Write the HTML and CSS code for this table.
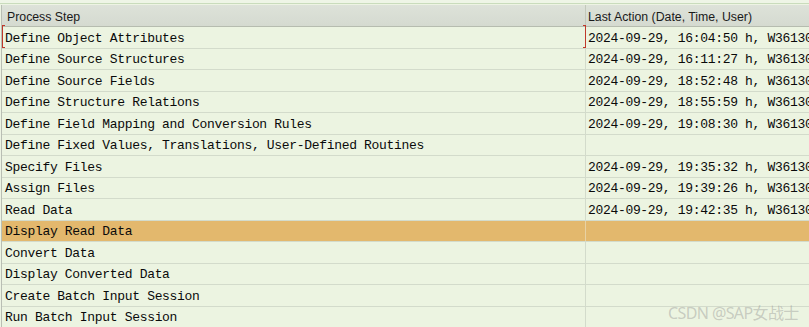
FILE: index.html
```html
<!DOCTYPE html>
<html>
<head>
<meta charset="utf-8">
<link rel="stylesheet" href="styles.css">
</head>
<body>
<div class="screen">
  <div class="topstrip"></div>
  <div class="table">
    <div class="row head">
      <div class="cell c1">Process Step</div>
      <div class="cell c2">Last Action (Date, Time, User)</div>
    </div>
    <div class="row focus">
      <div class="cell c1">Define Object Attributes</div>
      <div class="cell c2">2024-09-29, 16:04:50 h, W36130</div>
      <span class="br br-l"></span><span class="br br-r"></span>
    </div>
    <div class="row"><div class="cell c1">Define Source Structures</div><div class="cell c2">2024-09-29, 16:11:27 h, W36130</div></div>
    <div class="row"><div class="cell c1">Define Source Fields</div><div class="cell c2">2024-09-29, 18:52:48 h, W36130</div></div>
    <div class="row"><div class="cell c1">Define Structure Relations</div><div class="cell c2">2024-09-29, 18:55:59 h, W36130</div></div>
    <div class="row"><div class="cell c1">Define Field Mapping and Conversion Rules</div><div class="cell c2">2024-09-29, 19:08:30 h, W36130</div></div>
    <div class="row"><div class="cell c1">Define Fixed Values, Translations, User-Defined Routines</div><div class="cell c2"></div></div>
    <div class="row"><div class="cell c1">Specify Files</div><div class="cell c2">2024-09-29, 19:35:32 h, W36130</div></div>
    <div class="row"><div class="cell c1">Assign Files</div><div class="cell c2">2024-09-29, 19:39:26 h, W36130</div></div>
    <div class="row"><div class="cell c1">Read Data</div><div class="cell c2">2024-09-29, 19:42:35 h, W36130</div></div>
    <div class="row sel"><div class="cell c1">Display Read Data</div><div class="cell c2"></div></div>
    <div class="row"><div class="cell c1">Convert Data</div><div class="cell c2"></div></div>
    <div class="row"><div class="cell c1">Display Converted Data</div><div class="cell c2"></div></div>
    <div class="row"><div class="cell c1">Create Batch Input Session</div><div class="cell c2"></div></div>
    <div class="row"><div class="cell c1">Run Batch Input Session</div><div class="cell c2"></div></div>
  </div>
  <div class="watermark">CSDN @SAP女战士</div>
</div>
</body>
</html>
```
FILE: styles.css
```css
html, body {
  margin: 0;
  padding: 0;
  background: #edf4e3;
  overflow: hidden;
}
.screen {
  position: relative;
  width: 809px;
  height: 327px;
  overflow: hidden;
}
.topstrip {
  height: 3px;
  background: #eef5e6;
  border-bottom: 1px solid #c9dcbc;
}
.table {
  margin-top: 1px;
  margin-left: 1px;
  border-left: 1px solid #b9beb4;
}
.row {
  position: relative;
  display: grid;
  grid-template-columns: 584px 1fr;
  height: 21.5px;
  box-sizing: border-box;
  border-bottom: 1px solid #d3dbcb;
  background: #ecf4e1;
  white-space: nowrap;
}
.cell {
  overflow: hidden;
  display: flex;
  align-items: center;
  padding-top: 2px;
}
.c1 {
  padding-left: 3px;
  border-right: 1px solid #d3dbcb;
}
.c2 {
  padding-left: 2px;
}
.row .cell {
  font-family: "Liberation Mono", "DejaVu Sans Mono", monospace;
  font-size: 13px;
  letter-spacing: -0.32px;
  color: #0a0a0a;
}
.row.head {
  height: 22px;
  background: linear-gradient(#dde2d9, #d5dad0);
  border-bottom: 1px solid #b6bcaf;
}
.row.head .cell {
  font-family: "Liberation Sans", Arial, sans-serif;
  font-size: 12.3px;
  letter-spacing: 0;
  color: #1a1a1a;
  padding-top: 2px;
}
.row.head .c1 {
  padding-left: 5px;
  border-right: 1px solid #c2c8bb;
}
.row.sel {
  background: #e3b86d;
}
.row.sel .c1 {
  border-right-color: #e8d2a4;
}
.br {
  position: absolute;
  top: -2px;
  width: 3px;
  height: 23px;
  border-top: 1px solid #c0392b;
  border-bottom: 1px solid #c0392b;
  box-sizing: border-box;
}
.br-l {
  left: 0;
  border-left: 1px solid #c0392b;
}
.br-r {
  left: 581px;
  border-right: 1px solid #c0392b;
}
.watermark {
  position: absolute;
  left: 668px;
  top: 300px;
  font-family: "Noto Sans", "Noto Sans CJK SC", sans-serif;
  font-size: 16px;
  color: rgba(140, 140, 140, 0.4);
  letter-spacing: -0.6px;
}
```
